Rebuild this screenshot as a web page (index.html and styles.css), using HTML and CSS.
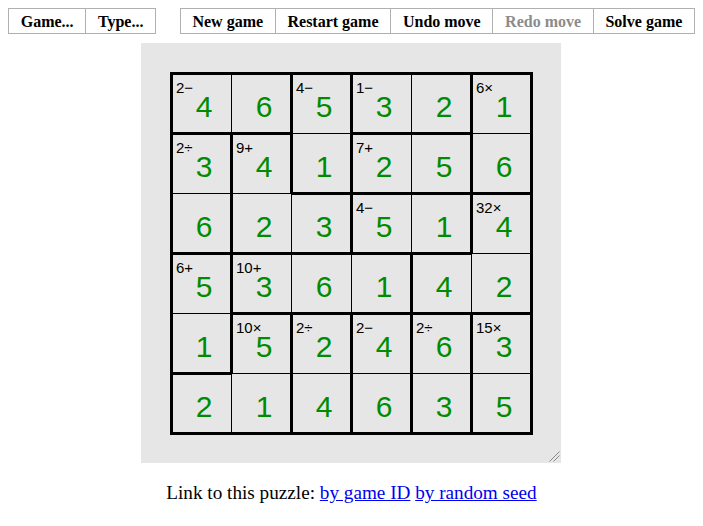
FILE: index.html
```html
<!DOCTYPE html>
<html>
<head>
<meta charset="utf-8">
<title>Keen</title>
<link rel="stylesheet" href="styles.css">
</head>
<body>
<div class="menubar">
  <ul class="menu">
    <li>Game...</li>
    <li>Type...</li>
  </ul>
  <ul class="menu">
    <li>New game</li>
    <li>Restart game</li>
    <li>Undo move</li>
    <li class="disabled">Redo move</li>
    <li>Solve game</li>
  </ul>
</div>
<div class="stage">
  <div class="canvas">
    <div class="board">
      <div class="cell T B L"><span class="clue">2−</span><span class="num">4</span></div>
      <div class="cell T B R"><span class="num">6</span></div>
      <div class="cell T L R"><span class="clue">4−</span><span class="num">5</span></div>
      <div class="cell T B L"><span class="clue">1−</span><span class="num">3</span></div>
      <div class="cell T B R"><span class="num">2</span></div>
      <div class="cell T L R"><span class="clue">6×</span><span class="num">1</span></div>

      <div class="cell T L R"><span class="clue">2÷</span><span class="num">3</span></div>
      <div class="cell T L R"><span class="clue">9+</span><span class="num">4</span></div>
      <div class="cell B L R"><span class="num">1</span></div>
      <div class="cell T B L"><span class="clue">7+</span><span class="num">2</span></div>
      <div class="cell T B R"><span class="num">5</span></div>
      <div class="cell B L R"><span class="num">6</span></div>

      <div class="cell B L R"><span class="num">6</span></div>
      <div class="cell B L"><span class="num">2</span></div>
      <div class="cell T B R"><span class="num">3</span></div>
      <div class="cell T B L"><span class="clue">4−</span><span class="num">5</span></div>
      <div class="cell T B R"><span class="num">1</span></div>
      <div class="cell T L R"><span class="clue">32×</span><span class="num">4</span></div>

      <div class="cell T L R"><span class="clue">6+</span><span class="num">5</span></div>
      <div class="cell T B L"><span class="clue">10+</span><span class="num">3</span></div>
      <div class="cell T B"><span class="num">6</span></div>
      <div class="cell T B R"><span class="num">1</span></div>
      <div class="cell T B L"><span class="num">4</span></div>
      <div class="cell B R"><span class="num">2</span></div>

      <div class="cell B L R"><span class="num">1</span></div>
      <div class="cell T L R"><span class="clue">10×</span><span class="num">5</span></div>
      <div class="cell T L R"><span class="clue">2÷</span><span class="num">2</span></div>
      <div class="cell T L R"><span class="clue">2−</span><span class="num">4</span></div>
      <div class="cell T L R"><span class="clue">2÷</span><span class="num">6</span></div>
      <div class="cell T L R"><span class="clue">15×</span><span class="num">3</span></div>

      <div class="cell T B L"><span class="num">2</span></div>
      <div class="cell B R"><span class="num">1</span></div>
      <div class="cell B L R"><span class="num">4</span></div>
      <div class="cell B L R"><span class="num">6</span></div>
      <div class="cell B L R"><span class="num">3</span></div>
      <div class="cell B L R"><span class="num">5</span></div>
    </div>
    <svg class="handle" width="12" height="12" viewBox="0 0 12 12">
      <line x1="1.5" y1="11.5" x2="11.5" y2="1.5" stroke="#8a8a8a" stroke-width="1"/>
      <line x1="5.5" y1="11.5" x2="11.5" y2="5.5" stroke="#8a8a8a" stroke-width="1"/>
    </svg>
  </div>
</div>
<p class="links">Link to this puzzle: <a href="#">by game ID</a> <a href="#">by random seed</a></p>
</body>
</html>
```
FILE: styles.css
```css
html, body {
  background: #ffffff;
}
body {
  margin: 8px;
  font-family: "Liberation Serif", "Times New Roman", serif;
  color: #000;
}
.menubar {
  display: flex;
  justify-content: space-between;
  align-items: flex-start;
  margin-bottom: 9px;
}
.menu {
  display: flex;
  margin: 0;
  padding: 0;
  list-style: none;
  border: 1px solid #b0b0b0;
}
.menu li {
  font-weight: bold;
  font-size: 16px;
  line-height: 18px;
  padding: 4px 11.7px 2px 11.7px;
  white-space: nowrap;
}
.menu li + li {
  border-left: 1px solid #b0b0b0;
}
.menu li.disabled {
  color: #8c8c8c;
}
.stage {
  display: flex;
  justify-content: center;
  padding-right: 1px;
}
.canvas {
  position: relative;
  width: 420px;
  height: 420px;
  box-sizing: border-box;
  padding: 29px;
  background: #e6e6e6;
}
.board {
  display: grid;
  grid-template-columns: repeat(6, 59px);
  grid-auto-rows: 59px;
  gap: 1px;
  width: max-content;
  border: 2px solid #000;
  background: #000;
}
.cell {
  --l: 0 0;
  --r: 0 0;
  --t: 0 0;
  --b: 0 0;
  display: grid;
  grid-template: 1fr / 1fr;
  background: #e6e6e6;
  box-shadow: inset var(--l) #000, inset var(--r) #000, inset var(--t) #000, inset var(--b) #000;
  font-family: "Liberation Sans", Arial, sans-serif;
}
.cell.L { --l: 1px 0; }
.cell.R { --r: -1px 0; }
.cell.T { --t: 0 1px; }
.cell.B { --b: 0 -1px; }
.clue {
  grid-area: 1 / 1;
  align-self: start;
  justify-self: start;
  margin: 5px 0 0 4px;
  font-size: 15px;
  line-height: 17px;
  color: #000;
}
.num {
  grid-area: 1 / 1;
  place-self: center;
  margin: 7px 0 0 5px;
  font-size: 30px;
  line-height: 30px;
  color: #008c00;
}
.handle {
  position: absolute;
  right: 1px;
  bottom: 1px;
}
.links {
  margin: 19px 0 0 0;
  text-align: center;
  font-size: 19.2px;
}
.links a {
  color: #0000ee;
}
```
